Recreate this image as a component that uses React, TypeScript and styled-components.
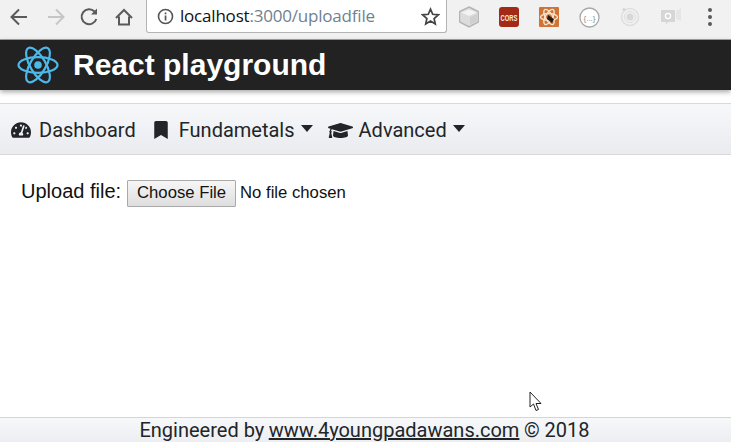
import React from "react";
import styled, { createGlobalStyle } from "styled-components";
import { FaTachometerAlt, FaBookmark, FaGraduationCap } from "react-icons/fa";

const Global = createGlobalStyle`
  html, body { margin: 0; padding: 0; background: #fff; }
  #root { width: 731px; height: 442px; overflow: hidden; }
`;

const Page = styled.div`
  position: relative;
  width: 731px;
  height: 442px;
  display: flex;
  flex-direction: column;
  overflow: hidden;
  font-family: Roboto, "Liberation Sans", sans-serif;
  color: #212529;
`;

const BrowserBar = styled.div`
  flex: 0 0 40px;
  box-sizing: border-box;
  height: 40px;
  display: flex;
  align-items: flex-start;
  background: #f1f1f1;
  border-bottom: 1px solid #a3a3a3;
`;

const NavIcons = styled.div`
  display: flex;
  width: 146px;
  height: 33px;
  align-items: center;
  padding-top: 1px;
  box-sizing: border-box;
  svg { display: block; }
`;

const AddressBar = styled.div`
  box-sizing: border-box;
  width: 301px;
  height: 33px;
  display: flex;
  align-items: center;
  background: #fff;
  border: 1px solid #b4b4b4;
  border-top: none;
  border-radius: 0 0 3px 3px;
  padding: 0 6px 0 10px;
`;

const Url = styled.span`
  flex: 1;
  margin-left: 6px;
  font: 17px/20px "Open Sans", sans-serif;
  letter-spacing: -0.2px;
  color: #111;
`;

const UrlRest = styled.span`
  color: #6f8290;
`;

const Extensions = styled.div`
  flex: 1;
  height: 33px;
  display: flex;
  align-items: center;
  padding: 1px 0 0 12px;
  box-sizing: border-box;
  gap: 20px;
`;

const Menu = styled.div`
  display: flex;
  flex-direction: column;
  gap: 3px;
  margin-left: 7px;
`;

const MenuDot = styled.i`
  display: block;
  width: 4px;
  height: 4px;
  border-radius: 50%;
  background: #5a5a5a;
`;

const Header = styled.header`
  flex: 0 0 50px;
  display: flex;
  align-items: center;
  background: #222;
  padding-left: 16px;
  box-shadow: 0 2px 5px rgba(0, 0, 0, 0.35);
  position: relative;
`;

const Title = styled.h1`
  margin: 0 0 0 13px;
  font: 700 30px/36px "Liberation Sans", sans-serif;
  color: #fff;
`;

const NavBar = styled.nav`
  margin-top: 13px;
  box-sizing: border-box;
  flex: 0 0 52px;
  display: flex;
  align-items: center;
  padding: 2px 0 0 11px;
  background: linear-gradient(#f7f8fa, #e9ebef);
  border-top: 1px solid #d9d9d9;
  border-bottom: 1px solid #d9d9d9;
`;

const NavItem = styled.a<{ $gap: number; $after: number }>`
  display: flex;
  align-items: center;
  font-size: 20px;
  line-height: 24px;
  color: #212529;
  margin-right: ${(p) => p.$after}px;
  svg { margin-right: ${(p) => p.$gap}px; color: #212529; display: block; }
`;

const Caret = styled.i`
  width: 0;
  height: 0;
  margin-left: 6px;
  margin-top: -3px;
  border-left: 6.5px solid transparent;
  border-right: 6.5px solid transparent;
  border-top: 7px solid #212529;
`;

const Main = styled.main`
  flex: 1;
  padding: 25px 0 0 21px;
  font-family: "Liberation Sans", sans-serif;
`;

const UploadRow = styled.div`
  display: flex;
  align-items: center;
  height: 27px;
`;

const Label = styled.label`
  font-size: 20px;
  line-height: 24px;
  color: #111;
  margin-top: -5px;
  margin-right: 6px;
`;

const ChooseButton = styled.button`
  box-sizing: border-box;
  width: 109px;
  height: 27px;
  padding: 0 0 2px;
  background: linear-gradient(#f6f6f6, #dedede);
  border: 1px solid #a9a9a9;
  border-radius: 1px;
  font: 16.7px "Liberation Sans", sans-serif;
  color: #111;
`;

const NoFile = styled.span`
  margin: -2px 0 0 4px;
  font-size: 16.7px;
  color: #111;
`;

const Footer = styled.footer`
  box-sizing: border-box;
  flex: 0 0 25px;
  height: 25px;
  display: flex;
  justify-content: center;
  align-items: center;
  background: linear-gradient(#f7f8fa, #eceef1);
  border-top: 1px solid #d5d5d5;
  font-size: 20px;
  line-height: 24px;
  color: #212529;
  padding-right: 2px;
`;

const FooterLink = styled.a`
  margin: 0 4.5px;
  color: #212529;
  text-decoration: underline;
`;

const Cursor = styled.svg`
  position: absolute;
  left: 529px;
  top: 391px;
`;

const Back = () => (
  <svg width="40" height="24" viewBox="0 0 40 24" fill="none" stroke="#5a5a5a" strokeWidth="2">
    <path d="M27 12H12M19 4.500L11.500 12L19 19.500" />
  </svg>
);
const Forward = () => (
  <svg width="30" height="24" viewBox="0 0 30 24" fill="none" stroke="#c6c6c6" strokeWidth="2">
    <path d="M8 12H23M16 4.500L23.500 12L16 19.500" />
  </svg>
);
const Reload = () => (
  <svg width="42" height="24" viewBox="0 0 42 24" fill="none" stroke="#5a5a5a" strokeWidth="2">
    <path d="M24.500 6.500A7.500 7.500 0 1 0 26.300 14" />
    <path d="M27 3.500V9.500H21Z" fill="#5a5a5a" stroke="none" />
  </svg>
);
const Home = () => (
  <svg width="24" height="24" viewBox="0 0 24 24" fill="none" stroke="#5a5a5a" strokeWidth="2">
    <path d="M4 13L12 5L20 13M7 11.500V19.500H17V11.500" />
  </svg>
);
const Info = () => (
  <svg width="17" height="17" viewBox="0 0 17 17">
    <circle cx="8.500" cy="8.500" r="7" fill="none" stroke="#555" strokeWidth="1.600" />
    <rect x="7.700" y="7.500" width="1.700" height="5" fill="#555" />
    <rect x="7.700" y="4.500" width="1.700" height="1.800" fill="#555" />
  </svg>
);
const Star = () => (
  <svg width="19" height="19" viewBox="0 0 19 19">
    <path d="M9.500 2.200L11.700 7.300L17.300 7.800L13.100 11.500L14.300 17L9.500 14.100L4.700 17L5.900 11.500L1.700 7.800L7.300 7.300Z" fill="none" stroke="#444" strokeWidth="1.700" />
  </svg>
);
const Cube = () => (
  <svg width="20" height="22" viewBox="0 0 20 22">
    <path d="M10 1L19.500 5.500V16L10 21L0.500 16V5.500Z" fill="#dcdcdc" stroke="#b5b5b5" strokeWidth="1.500" />
    <path d="M2.500 6.500L10 3.500L17.500 6.500L10 10Z" fill="#f3f3f3" />
    <path d="M11 11L18 8V15L11 18.500Z" fill="#cfcfcf" />
  </svg>
);
const Cors = () => (
  <svg width="20" height="20" viewBox="0 0 20 20">
    <rect width="20" height="20" rx="3" fill="#a32a16" />
    <text transform="scale(1 1.700)" x="10" y="8.300" textAnchor="middle" fill="#fbeee0" fontFamily="Liberation Sans" fontWeight="700" fontSize="5.800">CORS</text>
  </svg>
);
const Bee = () => (
  <svg width="20" height="20" viewBox="0 0 20 20">
    <rect width="20" height="20" rx="1" fill="#cf7434" />
    <g fill="none" stroke="#f6e4d2" strokeWidth="1.400">
      <ellipse cx="10" cy="10" rx="8.500" ry="3.500" />
      <ellipse cx="10" cy="10" rx="8.500" ry="3.500" transform="rotate(60 10 10)" />
      <ellipse cx="10" cy="10" rx="8.500" ry="3.500" transform="rotate(120 10 10)" />
    </g>
    <path d="M9 8L15 12L13 16L8 12Z" fill="#2a1a12" />
  </svg>
);
const Braces = () => (
  <svg width="21" height="21" viewBox="0 0 21 21">
    <circle cx="10.500" cy="10.500" r="9.500" fill="#fff" stroke="#a8a8a8" strokeWidth="1.300" />
    <text x="10.500" y="13.500" textAnchor="middle" fill="#8c8c8c" fontFamily="Liberation Sans" fontSize="8">{"{...}"}</text>
  </svg>
);
const Ionic = () => (
  <svg width="20" height="20" viewBox="0 0 20 20" fill="none" stroke="#dedede">
    <circle cx="10" cy="10" r="8.500" strokeWidth="1.500" />
    <circle cx="10" cy="10" r="3.500" fill="#d8d8d8" stroke="none" />
    <circle cx="10" cy="10" r="5.500" strokeWidth="1" />
    <circle cx="4" cy="2.500" r="1.500" fill="#d4d4d4" stroke="none" />
  </svg>
);
const Camera = () => (
  <svg width="21" height="20" viewBox="0 0 21 20">
    <path d="M1 3H15V15H8L6 18V15H1Z" fill="#d6d6d6" />
    <path d="M16 4L21 1V14L16 12Z" fill="#e6e6e6" />
    <circle cx="8" cy="9" r="2.600" fill="none" stroke="#fff" strokeWidth="1.300" />
  </svg>
);
const Atom = () => (
  <svg width="44" height="42" viewBox="0 0 44 42" fill="none" stroke="#4db8ea" strokeWidth="2.200">
    <ellipse cx="22" cy="21" rx="19.500" ry="7.800" />
    <ellipse cx="22" cy="21" rx="19.500" ry="7.800" transform="rotate(60 22 21)" />
    <ellipse cx="22" cy="21" rx="19.500" ry="7.800" transform="rotate(120 22 21)" />
    <circle cx="22" cy="21" r="3.800" fill="#4db8ea" stroke="none" />
  </svg>
);

export default function App() {
  return (
    <Page>
      <Global />
      <BrowserBar>
        <NavIcons>
          <Back />
          <Forward />
          <Reload />
          <Home />
        </NavIcons>
        <AddressBar>
          <Info />
          <Url>
            localhost<UrlRest>:3000/uploadfile</UrlRest>
          </Url>
          <Star />
        </AddressBar>
        <Extensions>
          <Cube />
          <Cors />
          <Bee />
          <Braces />
          <Ionic />
          <Camera />
          <Menu>
            <MenuDot />
            <MenuDot />
            <MenuDot />
          </Menu>
        </Extensions>
      </BrowserBar>
      <Header>
        <Atom />
        <Title>React playground</Title>
      </Header>
      <NavBar>
        <NavItem $gap={8} $after={16}>
          <FaTachometerAlt size={20} />
          Dashboard
        </NavItem>
        <NavItem $gap={9} $after={15}>
          <FaBookmark size={18} />
          Fundametals
          <Caret />
        </NavItem>
        <NavItem $gap={6} $after={0}>
          <FaGraduationCap size={25} />
          Advanced
          <Caret />
        </NavItem>
      </NavBar>
      <Main>
        <UploadRow>
          <Label>Upload file:</Label>
          <ChooseButton type="button">Choose File</ChooseButton>
          <NoFile>No file chosen</NoFile>
        </UploadRow>
      </Main>
      <Footer>
        Engineered by
        <FooterLink href="#">www.4youngpadawans.com</FooterLink>
        © 2018
      </Footer>
      <Cursor width="14" height="21" viewBox="0 0 14 21">
        <path d="M1 1V16L4.500 13L7 19.500L9.500 18.500L7 12.500H12Z" fill="#fff" stroke="#222" strokeWidth="1" />
      </Cursor>
    </Page>
  );
}
